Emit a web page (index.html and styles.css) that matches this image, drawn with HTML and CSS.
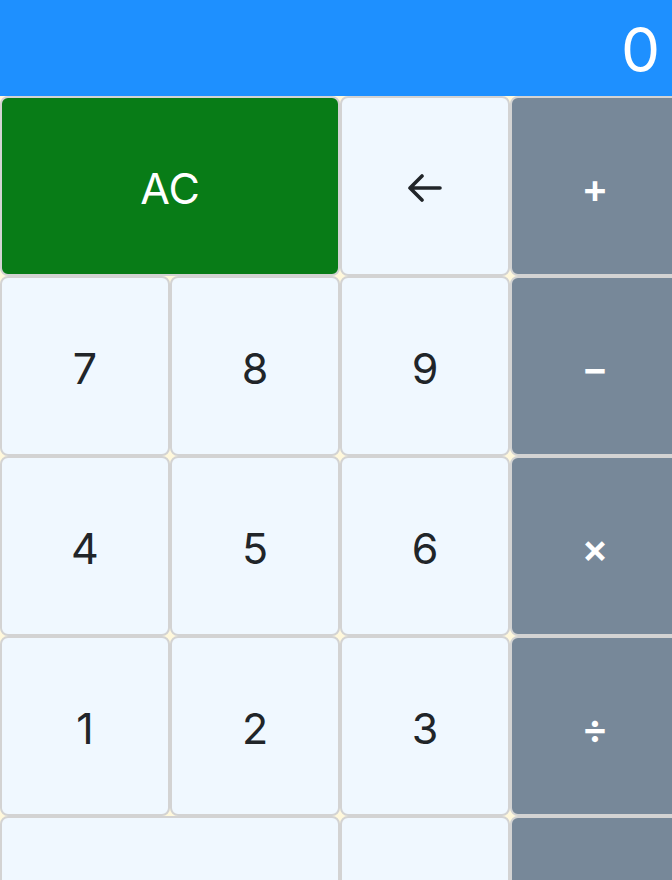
FILE: index.html
```html
<!DOCTYPE html>
<html>
<head>
<meta charset="utf-8">
<link rel="stylesheet" href="styles.css">
</head>
<body>
<div class="calc">
  <div class="display">0</div>
  <div class="keys">
    <button class="key clear span2">AC</button>
    <button class="key"><svg class="back" width="34" height="28" viewBox="0 0 34 28"><path d="M32 14H2M14 2L2 14L14 26" fill="none" stroke="#212529" stroke-width="3.6" stroke-linecap="round" stroke-linejoin="round"/></svg></button>
    <button class="key op">+</button>
    <button class="key">7</button>
    <button class="key">8</button>
    <button class="key">9</button>
    <button class="key op">−</button>
    <button class="key">4</button>
    <button class="key">5</button>
    <button class="key">6</button>
    <button class="key op">×</button>
    <button class="key">1</button>
    <button class="key">2</button>
    <button class="key">3</button>
    <button class="key op">÷</button>
    <button class="key span2">0</button>
    <button class="key">.</button>
    <button class="key op">=</button>
  </div>
</div>
</body>
</html>
```
FILE: styles.css
```css
html, body {
  margin: 0;
  padding: 0;
  overflow: hidden;
  background: #fff8dc;
}
.calc {
  width: 680px;
  font-family: Inter, "Noto Sans", sans-serif;
}
.display {
  height: 96px;
  width: 672px;
  background: #1e90ff;
  color: #fff;
  font-size: 62px;
  display: flex;
  align-items: center;
  justify-content: flex-end;
  padding-right: 12px;
  padding-top: 2px;
  box-sizing: border-box;
}
.keys {
  display: grid;
  grid-template-columns: repeat(4, 170px);
  grid-auto-rows: 180px;
  background: #fff8dc;
}
.key {
  margin: 0;
  border: 2px solid #d3d3d3;
  border-radius: 8px;
  background: #f0f8ff;
  color: #212529;
  font-family: Inter, "Noto Sans", sans-serif;
  font-size: 43px;
  display: flex;
  align-items: center;
  justify-content: center;
  padding: 4px 0 0;
}
.span2 {
  grid-column: span 2;
}
.clear {
  background: #087c17;
  color: #fff;
}
.op {
  background: #778899;
  color: #fff;
  font-size: 40px;
  font-weight: 600;
}
.back {
  display: block;
}
```
